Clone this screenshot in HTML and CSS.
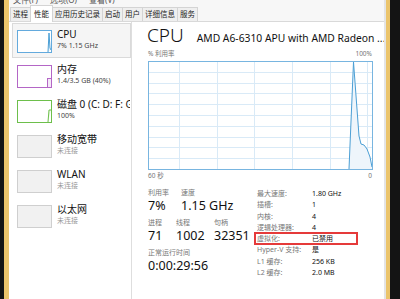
FILE: index.html
```html
<!DOCTYPE html>
<html>
<head>
<meta charset="utf-8">
<title>任务管理器</title>
<link rel="stylesheet" href="styles.css">
</head>
<body>
<div class="screen">
  <div class="edge-left"><span class="dark"></span><span class="gold"></span></div>
  <div class="window">
    <div class="menubar"><span>文件(F)</span><span>选项(O)</span><span>查看(V)</span></div>
    <div class="tabs">
      <span class="tab">进程</span>
      <span class="tab active">性能</span>
      <span class="tab">应用历史记录</span>
      <span class="tab">启动</span>
      <span class="tab">用户</span>
      <span class="tab">详细信息</span>
      <span class="tab">服务</span>
    </div>
    <div class="main">
      <div class="sidebar">
        <div class="item selected">
          <div class="thumb cpu">
            <svg width="33" height="21" viewBox="0 0 33 21"><polyline points="30,21 31,2 32,17 33,19" fill="#eef5fb" stroke="#4b9fd5" stroke-width="1"/></svg>
          </div>
          <div class="meta"><div class="name">CPU</div><div class="sub">7% 1.15 GHz</div></div>
        </div>
        <div class="item">
          <div class="thumb mem">
            <svg width="33" height="21" viewBox="0 0 33 21"><rect x="29.5" y="12.5" width="4" height="9" fill="#f4e8f7" stroke="#b466c6"/></svg>
          </div>
          <div class="meta"><div class="name">内存</div><div class="sub">1.4/3.5 GB (40%)</div></div>
        </div>
        <div class="item">
          <div class="thumb disk">
            <svg width="33" height="21" viewBox="0 0 33 21"><polyline points="30,21 31,9 33,9" fill="#edf7e8" stroke="#6dbf4b"/></svg>
          </div>
          <div class="meta"><div class="name">磁盘 0 (C: D: F: G:</div><div class="sub">100%</div></div>
        </div>
        <div class="item">
          <div class="thumb off"></div>
          <div class="meta"><div class="name">移动宽带</div><div class="sub muted">未连接</div></div>
        </div>
        <div class="item">
          <div class="thumb off"></div>
          <div class="meta"><div class="name">WLAN</div><div class="sub muted">未连接</div></div>
        </div>
        <div class="item">
          <div class="thumb off"></div>
          <div class="meta"><div class="name">以太网</div><div class="sub muted">未连接</div></div>
        </div>
      </div>

      <div class="detail">
        <div class="header">
          <span class="big">CPU</span>
          <span class="model">AMD A6-6310 APU with AMD Radeon ...</span>
        </div>
        <div class="axis"><span>% 利用率</span><span>100%</span></div>
        <svg class="graph" width="225" height="109" viewBox="0 0 225 109">
          <g stroke="#d9eaf7" stroke-width="1">
            <line x1="31.5" y1="0" x2="31.5" y2="109"/>
            <line x1="69.5" y1="0" x2="69.5" y2="109"/>
            <line x1="106.5" y1="0" x2="106.5" y2="109"/>
            <line x1="144.5" y1="0" x2="144.5" y2="109"/>
            <line x1="182.5" y1="0" x2="182.5" y2="109"/>
            <line x1="219.5" y1="0" x2="219.5" y2="109"/>
            <line x1="0" y1="11.5" x2="225" y2="11.5"/>
            <line x1="0" y1="22.5" x2="225" y2="22.5"/>
            <line x1="0" y1="32.5" x2="225" y2="32.5"/>
            <line x1="0" y1="43.5" x2="225" y2="43.5"/>
            <line x1="0" y1="54.5" x2="225" y2="54.5"/>
            <line x1="0" y1="65.5" x2="225" y2="65.5"/>
            <line x1="0" y1="76.5" x2="225" y2="76.5"/>
            <line x1="0" y1="86.5" x2="225" y2="86.5"/>
            <line x1="0" y1="97.5" x2="225" y2="97.5"/>
          </g>
          <polygon points="201,108 205.5,1 211,75 213,83 216,84 219,88 222,96 224,106 224,108" fill="#eef5fb"/>
          <polyline points="201,108 205.5,1 211,75 213,83 216,84 219,88 222,96 224,106" fill="none" stroke="#4b9fd5" stroke-width="1"/>
          <rect x="0.5" y="0.5" width="224" height="108" fill="none" stroke="#78b5e0"/>
        </svg>
        <div class="axis"><span>60 秒</span><span>0</span></div>

        <div class="stats">
          <div class="live">
            <div class="row">
              <div class="cell w1"><div class="lbl">利用率</div><div class="val">7%</div></div>
              <div class="cell"><div class="lbl">速度</div><div class="val">1.15 GHz</div></div>
            </div>
            <div class="row">
              <div class="cell w2"><div class="lbl">进程</div><div class="val">71</div></div>
              <div class="cell w3"><div class="lbl">线程</div><div class="val">1002</div></div>
              <div class="cell"><div class="lbl">句柄</div><div class="val">32351</div></div>
            </div>
            <div class="row">
              <div class="cell"><div class="lbl">正常运行时间</div><div class="val">0:00:29:56</div></div>
            </div>
          </div>
          <div class="specs">
            <div class="spec"><span class="k">最大速度:</span><span class="v">1.80 GHz</span></div>
            <div class="spec"><span class="k">插槽:</span><span class="v">1</span></div>
            <div class="spec"><span class="k">内核:</span><span class="v">4</span></div>
            <div class="spec"><span class="k">逻辑处理器:</span><span class="v">4</span></div>
            <div class="spec mark"><span class="k">虚拟化:</span><span class="v">已禁用</span></div>
            <div class="spec"><span class="k">Hyper-V 支持:</span><span class="v">是</span></div>
            <div class="spec"><span class="k">L1 缓存:</span><span class="v">256 KB</span></div>
            <div class="spec"><span class="k">L2 缓存:</span><span class="v">2.0 MB</span></div>
          </div>
        </div>
      </div>
    </div>
  </div>
  <div class="edge-right"><span class="line"></span><span class="gold"></span><span class="dark wide"></span></div>
</div>
</body>
</html>
```

FILE: styles.css
```css
body{
	margin:0;
	width:400px;
	height:299px;
	overflow:hidden;
	background:#fff;
	font-family:"Noto Sans","Noto Sans CJK SC",sans-serif;
	color:#1a1a1a;
}
.screen{
	display:flex;
	height:299px;
}
.edge-left, .edge-right{
	display:flex;
}
.dark{
	width:4px;
	background:#141414;
}
.dark.wide{
	width:10px;
}
.gold{
	width:5px;
	background:#ebc46b;
}
.edge-right .gold{
	width:4px;
}
.edge-right .line{
	width:2px;
	background:#e4e4e4;
}
.window{
	flex:1;
	min-width:0;
	display:flex;
	flex-direction:column;
	background:#fff;
}

/* menu, only its lower edge is on screen */
.menubar{
	height:5px;
	overflow:hidden;
	display:flex;
	align-items:flex-end;
	gap:12px;
	padding-left:4px;
	background:#f7f7f7;
}
.menubar span{
	flex-shrink:0;
	font-size:8px;
	line-height:10px;
	color:#555;
}

.tabs{
	display:flex;
	align-items:flex-end;
	height:16px;
	padding-left:2px;
	border-bottom:1px solid #d9d9d9;
	background:#f7f7f7;
}
.tab{
	font-size:7.5px;
	line-height:13px;
	padding:0 2px;
	border:1px solid #d4d4d4;
	border-bottom:none;
	background:#efefef;
	margin-left:-1px;
	color:#222;
}
.tab.active{
	background:#fff;
	line-height:16px;
	padding:0 3px;
	margin-bottom:-1px;
	position:relative;
}

.main{
	flex:1;
	display:flex;
	min-height:0;
}

/* left list */
.sidebar{
	width:123px;
	box-sizing:border-box;
	flex-shrink:0;
	padding:1px 0 0 3px;
	border-right:1px solid #dedede;
	overflow:hidden;
}
.item{
	display:flex;
	gap:5px;
	height:35px;
	box-sizing:border-box;
	padding:6px 0 0 4px;
	border:1px solid transparent;
	overflow:hidden;
	white-space:nowrap;
}
.item.selected{
	background:#f5f5f5;
	border-color:#dadada;
}
.thumb{
	width:35px;
	height:23px;
	box-sizing:border-box;
	flex-shrink:0;
	border:1px solid #c8c8c8;
	background:#fff;
}
.thumb svg{
	display:block;
}
.thumb.cpu{ border-color:#63aadd; }
.thumb.mem{ border-color:#b466c6; }
.thumb.disk{ border-color:#6dbf4b; }
.thumb.off{ background:#f1f1f1; border-color:#cfcfcf; }
.meta{
	margin-top:-2px;
}
.name{
	font-size:10px;
	line-height:13px;
	color:#111;
}
.sub{
	font-size:7px;
	line-height:10px;
	color:#444;
}
.sub.muted{
	color:#999;
}

/* right side */
.detail{
	flex:1;
	min-width:0;
	padding:0 12px 0 15px;
	display:flex;
	flex-direction:column;
}
.header{
	display:flex;
	align-items:baseline;
	gap:13px;
	height:27px;
	white-space:nowrap;
}
.big{
	font-size:19px;
	line-height:26px;
	font-weight:300;
	color:#111;
}
.model{
	font-size:10.3px;
	color:#111;
}
.axis{
	display:flex;
	justify-content:space-between;
	font-size:6.5px;
	line-height:10px;
	color:#777;
	padding-left:1px;
}
.graph{
	display:block;
	margin:2px 0 1px 1px;
}

.stats{
	display:flex;
	margin-top:7px;
	padding-left:1px;
}
.live{
	width:109px;
}
.row{
	display:flex;
	height:30px;
}
.cell.w1{ width:33px; }
.cell.w2{ width:28px; }
.cell.w3{ width:38px; }
.lbl{
	font-size:7px;
	line-height:10px;
	color:#777;
}
.val{
	font-size:12.5px;
	line-height:16px;
	color:#111;
}
.specs{
	font-size:7px;
}
.spec{
	display:flex;
	line-height:11.3px;
}
.k{
	width:55px;
	color:#777;
}
.v{
	color:#111;
}
.spec.mark{
	outline:2px solid #e53a3a;
	outline-offset:-1px;
	width:100px;
	margin-left:-2px;
	padding-left:2px;
}
```
